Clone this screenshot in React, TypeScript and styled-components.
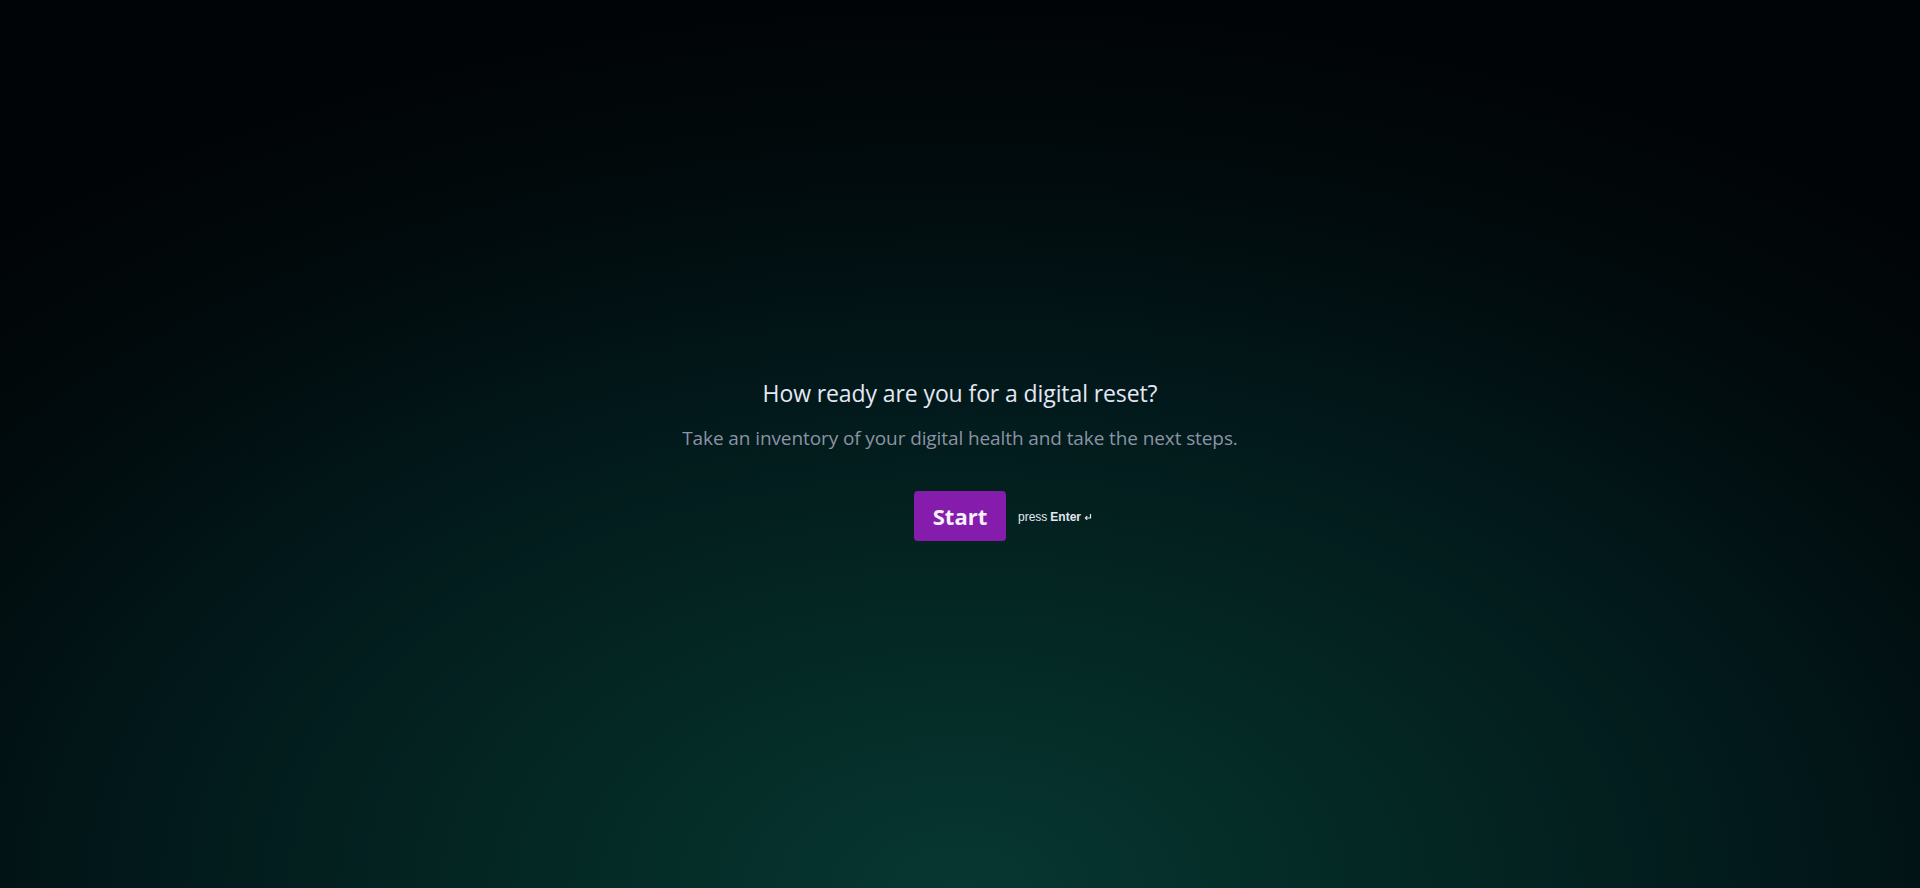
import React from "react";
import styled, { createGlobalStyle } from "styled-components";

const Global = createGlobalStyle`
  html, body { margin: 0; padding: 0; }
  body {
    background: #010406;
    font-family: "Open Sans", "Noto Sans", sans-serif;
  }
  * { box-sizing: border-box; }
`;

const Page = styled.main`
  height: 888px;
  width: 100%;
  display: flex;
  flex-direction: column;
  align-items: center;
  justify-content: center;
  padding-top: 30px;
  background: radial-gradient(
    ellipse 75% 100% at 50% 100%,
    #073731 0%,
    #042824 30%,
    #02181a 58%,
    #010a0c 82%,
    #010407 100%
  );
`;

const TextBlock = styled.div`
  display: flex;
  flex-direction: column;
  align-items: center;
  gap: 15px;
  text-align: center;
`;

const Title = styled.h1`
  margin: 0;
  font-size: 23px;
  line-height: 31px;
  font-weight: 400;
  color: #e4e8f6;
  letter-spacing: -0.1px;
`;

const Subtitle = styled.p`
  margin: 0;
  font-size: 19px;
  line-height: 28px;
  font-weight: 400;
  color: #8b93a5;
  letter-spacing: -0.1px;
`;

const ActionRow = styled.div`
  margin-top: 39px;
  width: 100%;
  display: grid;
  grid-template-columns: 1fr auto 1fr;
  align-items: center;
`;

const StartButton = styled.button`
  grid-column: 2;
  width: 92px;
  height: 50px;
  border: none;
  border-radius: 4px;
  background: #861cac;
  color: #f4f0fa;
  font-family: "Open Sans", "Noto Sans", sans-serif;
  font-weight: 700;
  font-size: 22px;
  cursor: pointer;
  padding: 0;
`;

const Hint = styled.span`
  grid-column: 3;
  justify-self: start;
  margin-left: 12px;
  margin-top: 2px;
  font-family: "Liberation Sans", Arial, sans-serif;
  font-size: 12px;
  color: #e2e8f2;
  display: inline-flex;
  align-items: center;
  gap: 3px;
`;

const Key = styled.b`
  font-weight: 700;
`;

const EnterIcon = () => (
  <svg width="8" height="8" viewBox="0 0 8 8" fill="none" stroke="#e2e8f2" strokeWidth="1.2">
    <path d="M6.5 1 V5 H1.5" />
    <path d="M3.2 3.2 L1.4 5 L3.2 6.8" />
  </svg>
);

export default function App() {
  return (
    <>
      <Global />
      <Page>
        <TextBlock>
          <Title>How ready are you for a digital reset?</Title>
          <Subtitle>Take an inventory of your digital health and take the next steps.</Subtitle>
        </TextBlock>
        <ActionRow>
          <StartButton>Start</StartButton>
          <Hint>
            press <Key>Enter</Key> <EnterIcon />
          </Hint>
        </ActionRow>
      </Page>
    </>
  );
}
